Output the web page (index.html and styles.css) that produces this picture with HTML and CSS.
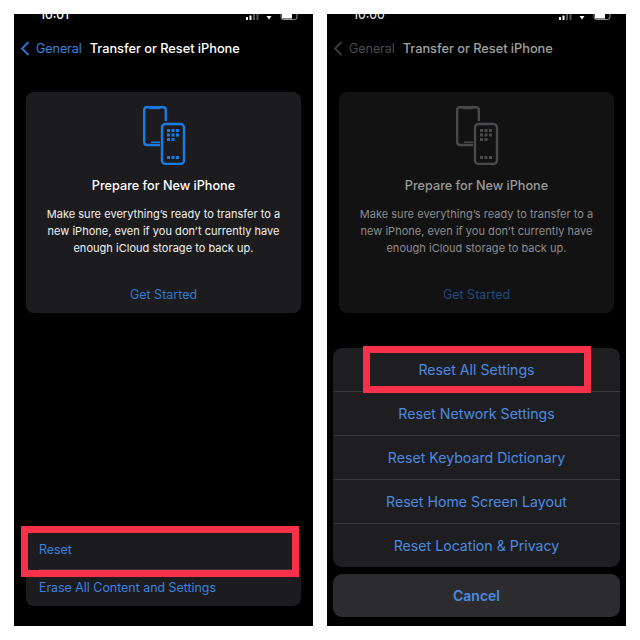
FILE: index.html
```html
<!DOCTYPE html>
<html lang="en">
<head>
<meta charset="utf-8">
<title>Transfer or Reset iPhone</title>
<link rel="stylesheet" href="styles.css">
</head>
<body>
<main class="stage">
  <section class="phone">
    <div class="status">
      <span class="time">10:01</span>
      <svg class="status-icons" width="52" height="6" viewBox="0 0 52 6"><rect x="0" y="3" width="2" height="3" fill="#fff"/><rect x="3.500" y="1.500" width="2" height="4.500" fill="#fff"/><rect x="7" y="0" width="2" height="6" fill="#555"/><rect x="10.500" y="0" width="2" height="6" fill="#555"/><path d="M20.500 2 L25.500 2 L23 5.500 Z" fill="#fff"/><path d="M35 0 V3 Q35 5.500 37.500 5.500 H48.500 Q51 5.500 51 3 V0" fill="none" stroke="#999" stroke-width="1"/><rect x="36" y="0" width="10" height="4.500" fill="#fff"/></svg>
    </div>
    <header class="nav">
      <svg class="chev" width="10" height="15" viewBox="0 0 10 15"><path d="M8.500 1 L2 7.500 L8.500 14" fill="none" stroke="currentColor" stroke-width="1.800"/></svg>
      <span class="back">General</span>
      <span class="title">Transfer or Reset iPhone</span>
    </header>
    <article class="card">
      <svg class="devices" width="44" height="60" viewBox="0 0 44 60">
        <path d="M23.800 16 V5 Q23.800 2.200 21 2.200 H5 Q2.200 2.200 2.200 5 V37 Q2.200 40 5 40 H18" fill="none" stroke="currentColor" stroke-width="2.400"/>
        <rect x="8" y="2" width="10" height="2.200" fill="currentColor"/>
        <rect x="9" y="36.500" width="9" height="1.500" fill="currentColor"/>
        <rect x="20" y="19" width="22" height="40" rx="3.500" fill="none" stroke="currentColor" stroke-width="2.400"/>
        <g fill="currentColor"><rect x="25" y="24" width="3" height="3"/><rect x="29.500" y="24" width="3" height="3"/><rect x="34" y="24" width="3" height="3"/><rect x="25" y="28.500" width="3" height="3"/><rect x="29.500" y="28.500" width="3" height="3"/><rect x="34" y="28.500" width="3" height="3"/><rect x="25" y="33" width="3" height="3"/><rect x="29.500" y="33" width="3" height="3"/><rect x="25" y="51" width="3" height="3"/><rect x="29.500" y="51" width="3" height="3"/><rect x="34" y="51" width="3" height="3"/></g>
      </svg>
      <h2 class="card-title">Prepare for New iPhone</h2>
      <p class="card-text">Make sure everything’s ready to transfer to a new iPhone, even if you don’t currently have enough iCloud storage to back up.</p>
      <a class="card-link">Get Started</a>
    </article>
    <div class="spacer"></div>
    <ul class="list">
      <li class="list-row">Reset</li>
      <li class="list-row">Erase All Content and Settings</li>
    </ul>
    <div class="mark mark-left"></div>
  </section>

  <section class="phone dimmed">
    <div class="status">
      <span class="time">10:00</span>
      <svg class="status-icons" width="52" height="6" viewBox="0 0 52 6"><rect x="0" y="3" width="2" height="3" fill="#fff"/><rect x="3.500" y="1.500" width="2" height="4.500" fill="#fff"/><rect x="7" y="0" width="2" height="6" fill="#555"/><rect x="10.500" y="0" width="2" height="6" fill="#555"/><path d="M20.500 2 L25.500 2 L23 5.500 Z" fill="#fff"/><path d="M35 0 V3 Q35 5.500 37.500 5.500 H48.500 Q51 5.500 51 3 V0" fill="none" stroke="#999" stroke-width="1"/><rect x="36" y="0" width="10" height="4.500" fill="#fff"/></svg>
    </div>
    <header class="nav">
      <svg class="chev" width="10" height="15" viewBox="0 0 10 15"><path d="M8.500 1 L2 7.500 L8.500 14" fill="none" stroke="currentColor" stroke-width="1.800"/></svg>
      <span class="back">General</span>
      <span class="title">Transfer or Reset iPhone</span>
    </header>
    <article class="card">
      <svg class="devices" width="44" height="60" viewBox="0 0 44 60">
        <path d="M23.800 16 V5 Q23.800 2.200 21 2.200 H5 Q2.200 2.200 2.200 5 V37 Q2.200 40 5 40 H18" fill="none" stroke="currentColor" stroke-width="2.400"/>
        <rect x="8" y="2" width="10" height="2.200" fill="currentColor"/>
        <rect x="9" y="36.500" width="9" height="1.500" fill="currentColor"/>
        <rect x="20" y="19" width="22" height="40" rx="3.500" fill="none" stroke="currentColor" stroke-width="2.400"/>
        <g fill="currentColor"><rect x="25" y="24" width="3" height="3"/><rect x="29.500" y="24" width="3" height="3"/><rect x="34" y="24" width="3" height="3"/><rect x="25" y="28.500" width="3" height="3"/><rect x="29.500" y="28.500" width="3" height="3"/><rect x="34" y="28.500" width="3" height="3"/><rect x="25" y="33" width="3" height="3"/><rect x="29.500" y="33" width="3" height="3"/><rect x="25" y="51" width="3" height="3"/><rect x="29.500" y="51" width="3" height="3"/><rect x="34" y="51" width="3" height="3"/></g>
      </svg>
      <h2 class="card-title">Prepare for New iPhone</h2>
      <p class="card-text">Make sure everything’s ready to transfer to a new iPhone, even if you don’t currently have enough iCloud storage to back up.</p>
      <a class="card-link">Get Started</a>
    </article>
    <div class="sheet">
      <ul class="sheet-group">
        <li class="sheet-row">Reset All Settings</li>
        <li class="sheet-row">Reset Network Settings</li>
        <li class="sheet-row">Reset Keyboard Dictionary</li>
        <li class="sheet-row">Reset Home Screen Layout</li>
        <li class="sheet-row">Reset Location &amp; Privacy</li>
      </ul>
      <button class="sheet-cancel">Cancel</button>
    </div>
    <div class="mark mark-right"></div>
  </section>
</main>
</body>
</html>
```
FILE: styles.css
```css
* { box-sizing: border-box; }
html, body { margin: 0; padding: 0; background: #fff; }
body { font-family: Inter, "Liberation Sans", sans-serif; }
.stage { display: flex; gap: 14px; padding: 14px; width: 640px; height: 640px; }
.phone {
  position: relative; width: 299px; height: 612px; background: #000;
  display: flex; flex-direction: column; overflow: hidden;
  --blue: #3a82e0; --icon: #1a7be2; --card: #1c1c1e; --title: #fff; --body: #f2f2f2; --link: #3079d4; --chev: #2a78d8;
}
.phone.dimmed {
  --card: #121213; --title: #9a9a9a; --body: #8c8c8c; --link: #1f4a7e; --icon: #4a4a4c; --chev: #3c3c3e; --blue: #4c4c4e;
}
.status { height: 6px; display: flex; align-items: flex-end; justify-content: space-between; padding: 0 15px 0 26px; overflow: hidden; flex: none; }
.time { font-size: 12px; line-height: 12px; font-weight: 500; color: #fff; margin-bottom: -1px; }
.dimmed .time { color: #ddd; }
.status-icons { flex: none; }
.nav { height: 36px; margin-top: 10px; display: flex; align-items: center; padding-left: 6px; flex: none; }
.chev { color: var(--chev); flex: none; }
.back { color: var(--blue); margin-left: 6px; font-size: 12.600px; letter-spacing: -0.1px; }
.title { color: #fff; font-weight: 500; margin-left: 8px; font-size: 12.850px; letter-spacing: -0.05px; }
.dimmed .title { color: #a0a0a0; }
.card {
  margin: 26px 12px 0; height: 221px; background: var(--card); border-radius: 8px; flex: none;
  display: flex; flex-direction: column; align-items: center; padding-top: 13px;
}
.devices { color: var(--icon); flex: none; }
.card-title { margin: 12px 0 0; font-size: 12.650px; line-height: 18px; font-weight: 500; color: var(--title); }
.card-text { margin: 11px 0 0; width: 250px; text-align: center; font-size: 11px; letter-spacing: 0.03px; line-height: 17px; color: var(--body); }
.card-link { margin-top: 29px; font-size: 12.500px; line-height: 18px; color: var(--link); }
.spacer { flex: 1; }
.list { list-style: none; margin: 0 12px 20px; padding: 0 0 0 13px; background: var(--card); border-radius: 8px; }
.list-row { height: 37.500px; display: flex; align-items: center; font-size: 12.400px; color: var(--blue); }
.list-row + .list-row { border-top: 1px solid #38383a; }
.sheet { position: absolute; left: 6px; right: 6px; top: 334px; display: flex; flex-direction: column; gap: 7px; }
.sheet-group { list-style: none; margin: 0; padding: 0; background: #1e1e20; border-radius: 9px; overflow: hidden; }
.sheet-row { height: 44px; display: flex; align-items: center; justify-content: center; font-size: 14.150px; color: #4a8ae0; }
.sheet-row:first-child { height: 43px; }
.sheet-row + .sheet-row { border-top: 1px solid #38383a; }
.sheet-cancel { height: 43px; border: 0; background: #2c2c2e; border-radius: 9px; font: 600 14px Inter, "Liberation Sans", sans-serif; color: #4a8ae0; }
.mark { position: absolute; border: 7px solid #f9304a; }
.mark-left { left: 7px; top: 512px; width: 278px; height: 51px; }
.mark-right { left: 36px; top: 332px; width: 228px; height: 47px; }
```
